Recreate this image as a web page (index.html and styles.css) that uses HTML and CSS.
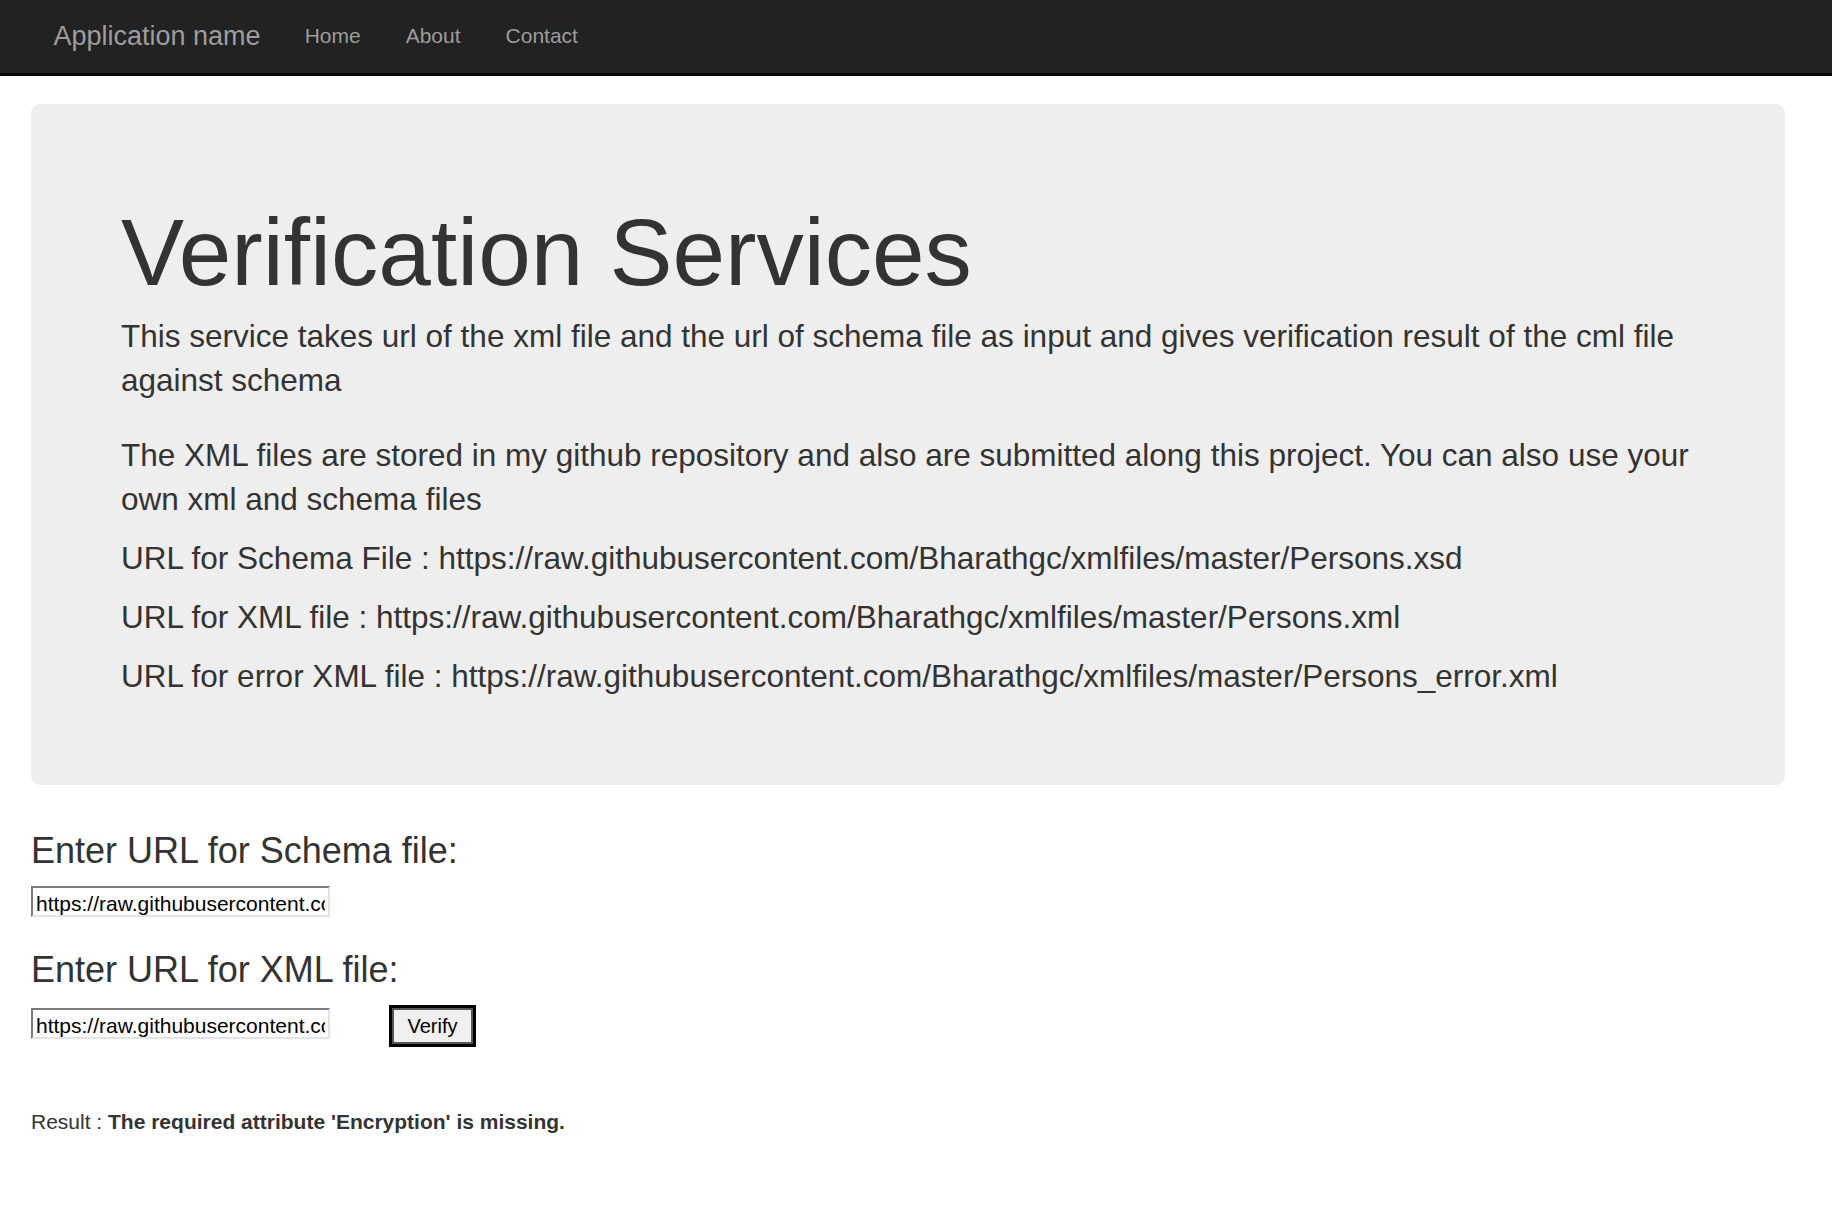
FILE: index.html
```html
<!DOCTYPE html>
<html lang="en">
<head>
<meta charset="utf-8">
<title>Verification Services</title>
<link rel="stylesheet" href="styles.css">
</head>
<body>
<header class="navbar">
  <div class="navbar-inner">
    <a class="brand" href="#">Application name</a>
    <ul class="nav">
      <li><a href="#">Home</a></li>
      <li><a href="#">About</a></li>
      <li><a href="#">Contact</a></li>
    </ul>
  </div>
</header>
<main class="container">
  <section class="jumbotron">
    <h1 class="title">Verification Services</h1>
    <p class="lead lead-first">This service takes url of the xml file and the url of schema file as input and gives verification result of the cml file against schema</p>
    <p class="lead lead-second">The XML files are stored in my github repository and also are submitted along this project. You can also use your own xml and schema files</p>
    <p class="lead url-line">URL for Schema File : https://raw.githubusercontent.com/Bharathgc/xmlfiles/master/Persons.xsd</p>
    <p class="lead url-line">URL for XML file : https://raw.githubusercontent.com/Bharathgc/xmlfiles/master/Persons.xml</p>
    <p class="lead url-line">URL for error XML file : https://raw.githubusercontent.com/Bharathgc/xmlfiles/master/Persons_error.xml</p>
  </section>
  <form class="verify-form" action="#">
    <h3 class="field-title field-title-first">Enter URL for Schema file:</h3>
    <input class="url-input url-input-first" type="text" value="https://raw.githubusercontent.com/Bharathgc/xmlfiles/master/Persons.xsd">
    <h3 class="field-title field-title-second">Enter URL for XML file:</h3>
    <div class="submit-row">
      <input class="url-input url-input-second" type="text" value="https://raw.githubusercontent.com/Bharathgc/xmlfiles/master/Persons_error.xml">
      <button class="verify-btn" type="button">Verify</button>
    </div>
    <p class="result">Result : <b>The required attribute 'Encryption' is missing.</b></p>
  </form>
</main>
</body>
</html>
```
FILE: styles.css
```css
html, body {
  margin: 0;
  padding: 0;
  background: #fff;
}
body {
  font-family: "Liberation Sans", Arial, Helvetica, sans-serif;
  color: #333;
}
a { text-decoration: none; }

.navbar {
  background: #222;
  height: 73px;
  border-bottom: 3px solid #080808;
}
.navbar-inner {
  display: flex;
  align-items: flex-start;
  padding-left: 31px;
}
.brand {
  display: block;
  font-size: 27px;
  line-height: 30px;
  padding: 20.5px 21.5px 0 22.5px;
  color: #9d9d9d;
}
.nav {
  display: flex;
  list-style: none;
  margin: 0;
  padding: 0;
}
.nav a {
  display: block;
  font-size: 21px;
  line-height: 30px;
  padding: 21px 22.5px 0;
  color: #9d9d9d;
}

.container {
  padding: 0 47px 0 31px;
}
.jumbotron {
  margin-top: 27.5px;
  background: #eee;
  border-radius: 9px;
  padding: 72px 70px 72px 90px;
}
.title {
  font-size: 94.5px;
  line-height: 104px;
  font-weight: normal;
  margin: 24px 0 10px;
  color: #333;
}
.lead {
  font-size: 31.5px;
  line-height: 44px;
  margin: 0 0 15px;
  font-weight: normal;
}
.lead-first {
  margin-bottom: 31px;
}

.verify-form {
  margin: 0;
}
.field-title {
  font-size: 36px;
  line-height: 39.6px;
  font-weight: normal;
  margin: 0;
  color: #333;
}
.field-title-first {
  margin-top: 46.5px;
}
.field-title-second {
  margin-top: 32.4px;
}
.url-input {
  display: block;
  box-sizing: border-box;
  width: 299px;
  height: 31px;
  margin: 0;
  padding: 5px 3px 0 3px;
  font-family: "Liberation Sans", Arial, sans-serif;
  font-size: 21px;
  color: #000;
  background: #fff;
  border-style: solid;
  border-width: 2px;
  border-color: #7a7a7a #e3e3e3 #e3e3e3 #7a7a7a;
  outline: none;
}
.url-input-first {
  margin-top: 15.9px;
}
.submit-row {
  display: flex;
  align-items: flex-start;
  margin-top: 16px;
}
.url-input-second {
  margin-top: 2.3px;
}
.verify-btn {
  box-sizing: border-box;
  width: 87px;
  height: 42px;
  margin-left: 59px;
  padding: 0;
  font-family: "Liberation Sans", Arial, sans-serif;
  font-size: 20px;
  color: #000;
  background: #f0f0f0;
  border: 3px solid #000;
  box-shadow: inset 0 0 0 2px #555;
  border-radius: 0;
}
.result {
  margin: 59.7px 0 0;
  font-size: 21px;
  line-height: 30px;
  color: #333;
}
.result b {
  font-weight: bold;
}
```
